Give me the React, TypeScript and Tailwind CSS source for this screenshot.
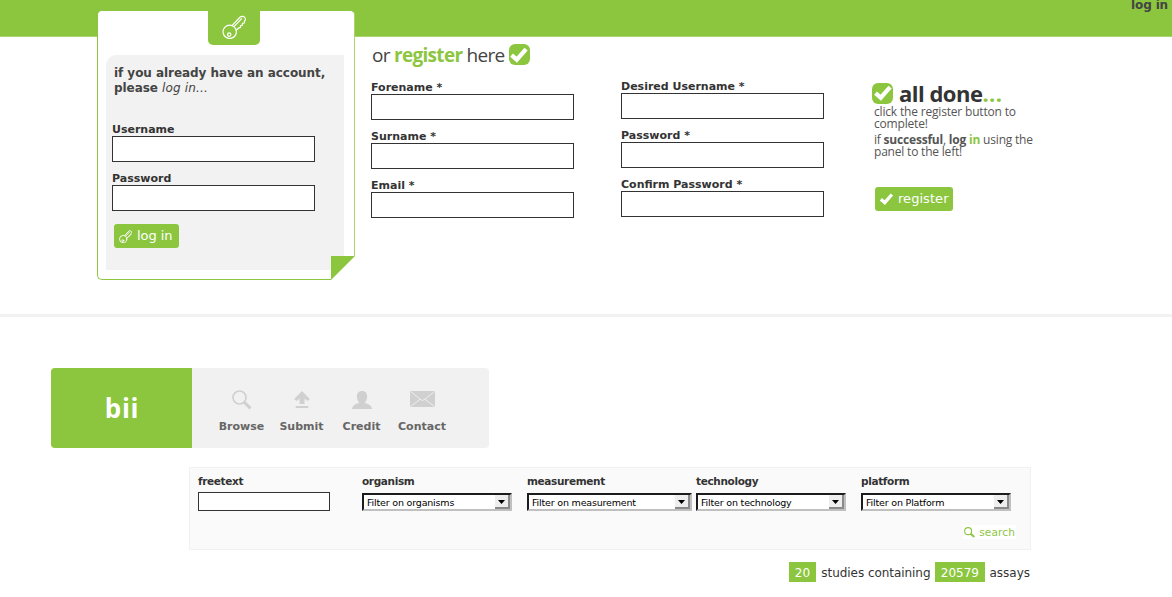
import React from "react";

const VERDANA = "font-['DejaVu_Sans','Verdana',sans-serif]";
const HUMANIST = "font-['Open_Sans',sans-serif]";

function KeyIcon({ className, sw }: { className: string; sw: number }) {
  return (
    <svg viewBox="0 0 24 24" className={className} fill="none" stroke="#fff" strokeWidth={sw} strokeLinejoin="round" strokeLinecap="round">
      <circle cx="7.7" cy="16.8" r="6.7" />
      <circle cx="7.2" cy="19.6" r="1.7" />
      <path d="M10.4 10.2 18.2 2c1.6-1.2 4.200-.7 5 1.200.4 1.200.1 2.300-.9 3.300l.1 1.500-1.900.4-.2 1.900-1.900.2.2 1.900-1.700.4-2.700 2.400" />
      <path d="M12.200 11.400 19.600 3.600" />
    </svg>
  );
}

function Tick({ className }: { className: string }) {
  return (
    <svg viewBox="0 0 16 14" className={className} fill="none" stroke="#fff" strokeWidth="3.800">
      <path d="M1.400 7.200 6 11.200 14.300 1.800" />
    </svg>
  );
}

function TickBox({ className }: { className: string }) {
  return (
    <span className={`flex h-[21px] w-[21px] items-center justify-center rounded-[6px] bg-[#8cc63f] ${className}`}>
      <Tick className="h-[16px] w-[18px]" />
    </span>
  );
}

function Field({ label, type = "text" }: { label: string; type?: string }) {
  return (
    <label className="block h-[49px] w-[203px]">
      <span className="block h-[14px] text-[11px] leading-[16px] font-bold whitespace-nowrap">{label}</span>
      <input type={type} className="block h-[26px] w-full border border-[#333] bg-white px-1 outline-none" />
    </label>
  );
}

function LoginCard() {
  return (
    <div className="relative h-[270px] w-[258px] shrink-0 rounded-[5px] border border-[#8cc63f] border-r-[#a9d56f] bg-white">
      <div className="-mt-px ml-[110px] flex h-[35px] w-[52px] items-start justify-center rounded-b-[5px] bg-[#8cc63f] pt-[5px]">
        <KeyIcon className="h-[24px] w-[24px]" sw={1.2} />
      </div>
      <div className="mt-[10px] ml-[8px] h-[215px] w-[238px] rounded-tl-[10px] bg-[#f2f2f2] pt-[11px] pl-[6px]">
        <p className="ml-[2px] text-[12px] leading-[15px] font-bold tracking-[-0.05px] whitespace-nowrap text-[#444]">
          if you already have an account,
          <br />
          please <em className="font-normal tracking-[0.15px]">log in...</em>
        </p>
        <form className="mt-[26px]">
          <Field label="Username" />
          <Field label="Password" type="password" />
          <button type="button" className="mt-[4px] ml-[2px] flex h-[24px] w-[65px] items-center rounded-[3px] bg-[#8cc63f] pl-[5px] text-[13px] text-white">
            <KeyIcon className="mt-px h-[13px] w-[13px]" sw={1.700} />
            <span className="ml-[5px] leading-[22px] tracking-[-0.05px] whitespace-nowrap">log in</span>
          </button>
        </form>
      </div>
      <svg className="absolute -right-px -bottom-px h-[24px] w-[24px]" viewBox="0 0 24 24">
        <path d="M0 0h24v24H0z" fill="#fff" />
        <path d="M0 0h24L0 24z" fill="#8cc63f" />
      </svg>
    </div>
  );
}

function NavItem({ label, className, children }: { label: string; className: string; children: React.ReactNode }) {
  return (
    <a className={`flex shrink-0 flex-col items-center pt-[22px] ${className}`}>
      <span className="flex h-[20px] items-center">{children}</span>
      <span className="mt-[10px] text-[11px] leading-[14px] font-bold text-[#666]">{label}</span>
    </a>
  );
}

function FilterSelect({ label, text, className }: { label: string; text: string; className: string }) {
  return (
    <div className={`shrink-0 ${className}`}>
      <div className="h-[18px] text-[10.500px] leading-[14px] font-bold tracking-[-0.35px]">{label}</div>
      <div className="mt-px flex h-[18px] items-center border-2 border-t-[#1c1c1c] border-r-[#c0c0c0] border-b-[#c0c0c0] border-l-[#1c1c1c] bg-white pl-[3px] text-[9.500px] text-black">
        <span className="grow pt-px leading-[14px] tracking-[-0.18px] whitespace-nowrap">{text}</span>
        <span className="flex h-[14px] w-[15px] items-center justify-center border-r-2 border-b-2 border-[#8a8a8a] bg-[#eee]">
          <svg viewBox="0 0 7 4" className="mt-px h-[4px] w-[7px]">
            <path d="M0 0h7L3.500 4z" fill="#000" />
          </svg>
        </span>
      </div>
    </div>
  );
}

export default function App() {
  return (
    <div className={`h-[597px] w-[1172px] overflow-hidden bg-white text-[#333] ${VERDANA}`}>
      <header className="flex h-[37px] justify-end border-b border-[#a9d56f] bg-[#8cc63f] pr-[4px]">
        <a className="h-[12px] text-[12px] leading-[10px] font-bold tracking-[-0.15px] text-[#444]">log in</a>
      </header>

      <section className="relative -mt-[27px] flex h-[307px] items-start border-b-[3px] border-[#f2f2f2] pl-[97px]">
        <LoginCard />
        <div className="ml-[16px] w-[250px] shrink-0 pt-[32px]">
          <h2 className={`flex h-[27px] items-center pl-[1px] text-[19px] tracking-[-0.7px] whitespace-nowrap text-[#444] ${HUMANIST}`}>
            <span>
              or <b className="text-[#8cc63f]">register</b> here
            </span>
            <TickBox className="-mt-[2px] ml-[4px]" />
          </h2>
          <div className="mt-[11px]">
            <Field label="Forename *" />
            <Field label="Surname *" />
            <Field label="Email *" />
          </div>
        </div>
        <div className="w-[251px] shrink-0 pt-[69px]">
          <Field label="Desired Username *" />
          <Field label="Password *" type="password" />
          <Field label="Confirm Password *" type="password" />
        </div>
        <div className={`w-[200px] pt-[70px] ${HUMANIST}`}>
          <h2 className="flex h-[26px] items-center text-[22px] font-bold tracking-[-0.5px] whitespace-nowrap">
            <TickBox className="mr-[6px]" />
            <span>
              all done<span className="tracking-[0.4px] text-[#8cc63f]">...</span>
            </span>
          </h2>
          <p className="pl-[2px] text-[12px] leading-[12px] tracking-[-0.18px] whitespace-nowrap text-[#555]">
            click the register button to
            <br />
            complete!
          </p>
          <p className="mt-[4px] pl-[2px] text-[12px] leading-[12px] tracking-[-0.2px] whitespace-nowrap text-[#555]">
            if <b>successful</b>, <b>log</b> <b className="text-[#8cc63f]">in</b> using the
            <br />
            panel to the left!
          </p>
          <button type="button" className={`mt-[29px] ml-[3px] flex h-[24px] w-[78px] items-center rounded-[3px] bg-[#8cc63f] pl-[4px] text-[13px] text-white ${VERDANA}`}>
            <Tick className="h-[12px] w-[15px]" />
            <span className="ml-[4px] leading-[22px] tracking-[0.05px]">register</span>
          </button>
        </div>
      </section>

      <nav className="mt-[51px] ml-[51px] flex h-[80px] w-[438px] overflow-hidden rounded-[4px] bg-[#f1f1f1]">
        <div className={`flex w-[141px] shrink-0 items-center justify-center bg-[#8cc63f] pt-px pl-px text-[26px] font-bold tracking-[0.7px] text-white ${HUMANIST}`}>bii</div>
        <NavItem label="Browse" className="ml-[19px] w-[61px]">
          <svg viewBox="0 0 20 20" className="ml-px h-[20px] w-[20px]" fill="none" stroke="#d0d0d0">
            <circle cx="7.500" cy="7.500" r="6.500" strokeWidth="1.700" />
            <path d="m12.300 12.300 6.200 6" strokeWidth="3" />
          </svg>
        </NavItem>
        <NavItem label="Submit" className="w-[59px]">
          <svg viewBox="0 0 16 18" className="h-[18px] w-[16px]" fill="#d0d0d0">
            <path d="M8 0 15.800 8 13.500 10 10.500 7.500V13h-5V7.500l-3 2.500L.2 8zM1.700 15h12.600v2H1.700z" />
          </svg>
        </NavItem>
        <NavItem label="Credit" className="w-[61px]">
          <svg viewBox="0 0 20 18" className="-mt-px h-[18px] w-[20px]" fill="#d0d0d0">
            <path d="M10 0c3.600 0 5.300 2.300 5.100 5.600-.1 3.300-1.400 5.100-2.400 6.200 1.400 1 6.500 1 7.300 6.200H0c.8-5.200 5.900-5.200 7.300-6.200C6.300 10.700 5 8.900 4.900 5.600 4.700 2.300 6.400 0 10 0z" />
          </svg>
        </NavItem>
        <NavItem label="Contact" className="w-[60px]">
          <svg viewBox="0 0 25 16" className="-mt-[2px] h-[16px] w-[25px]">
            <rect width="25" height="16" rx="1" fill="#d0d0d0" />
            <path d="m.5.5 9.700 7.700L12.500 9.500l2.300-1.300L24.500.5M.5 15.500l9.700-7.300M24.500 15.500l-9.700-7.300" fill="none" stroke="#f1f1f1" strokeWidth=".9" />
          </svg>
        </NavItem>
      </nav>

      <section className="mt-[19px] ml-[189px] h-[83px] w-[842px] border border-[#f1f1f1] bg-[#fafafa] px-[8px] pt-[6px]">
        <div className="flex items-start">
          <label className="w-[164px] shrink-0">
            <span className="block h-[18px] text-[10.500px] leading-[14px] font-bold tracking-[-0.35px]">freetext</span>
            <input className="block h-[19px] w-[132px] border border-[#333] bg-white px-1 outline-none" />
          </label>
          <FilterSelect label="organism" text="Filter on organisms" className="w-[150px]" />
          <FilterSelect label="measurement" text="Filter on measurement" className="ml-[15px] w-[165px]" />
          <FilterSelect label="technology" text="Filter on technology" className="ml-[4px] w-[150px]" />
          <FilterSelect label="platform" text="Filter on Platform" className="ml-[15px] w-[150px]" />
        </div>
        <div className="mt-[14px] flex justify-end pr-[6px]">
          <button type="button" className="flex h-[14px] items-center bg-white px-[1px] text-[10.500px] leading-[14px] tracking-[0.15px] text-[#8cc63f]">
            <svg viewBox="0 0 20 20" className="mr-[4px] h-[11px] w-[11px]" fill="none" stroke="#8cc63f">
              <circle cx="7.500" cy="7.500" r="6.300" strokeWidth="2" />
              <path d="m12.300 12.300 6.200 6" strokeWidth="3.500" />
            </svg>
            search
          </button>
        </div>
      </section>

      <p className="mt-[12px] mr-[142px] flex h-[20px] items-center justify-end text-[12px] leading-[20px] whitespace-nowrap">
        <span className="h-[20px] w-[27px] bg-[#8cc63f] pt-px pr-px text-center text-white">20</span>
        <span className="w-[119px] pt-px text-center tracking-[-0.05px]">studies containing</span>
        <span className="h-[20px] w-[50px] bg-[#8cc63f] pt-px pr-px text-center text-white">20579</span>
        <span className="ml-[4px] pt-px">assays</span>
      </p>
    </div>
  );
}
